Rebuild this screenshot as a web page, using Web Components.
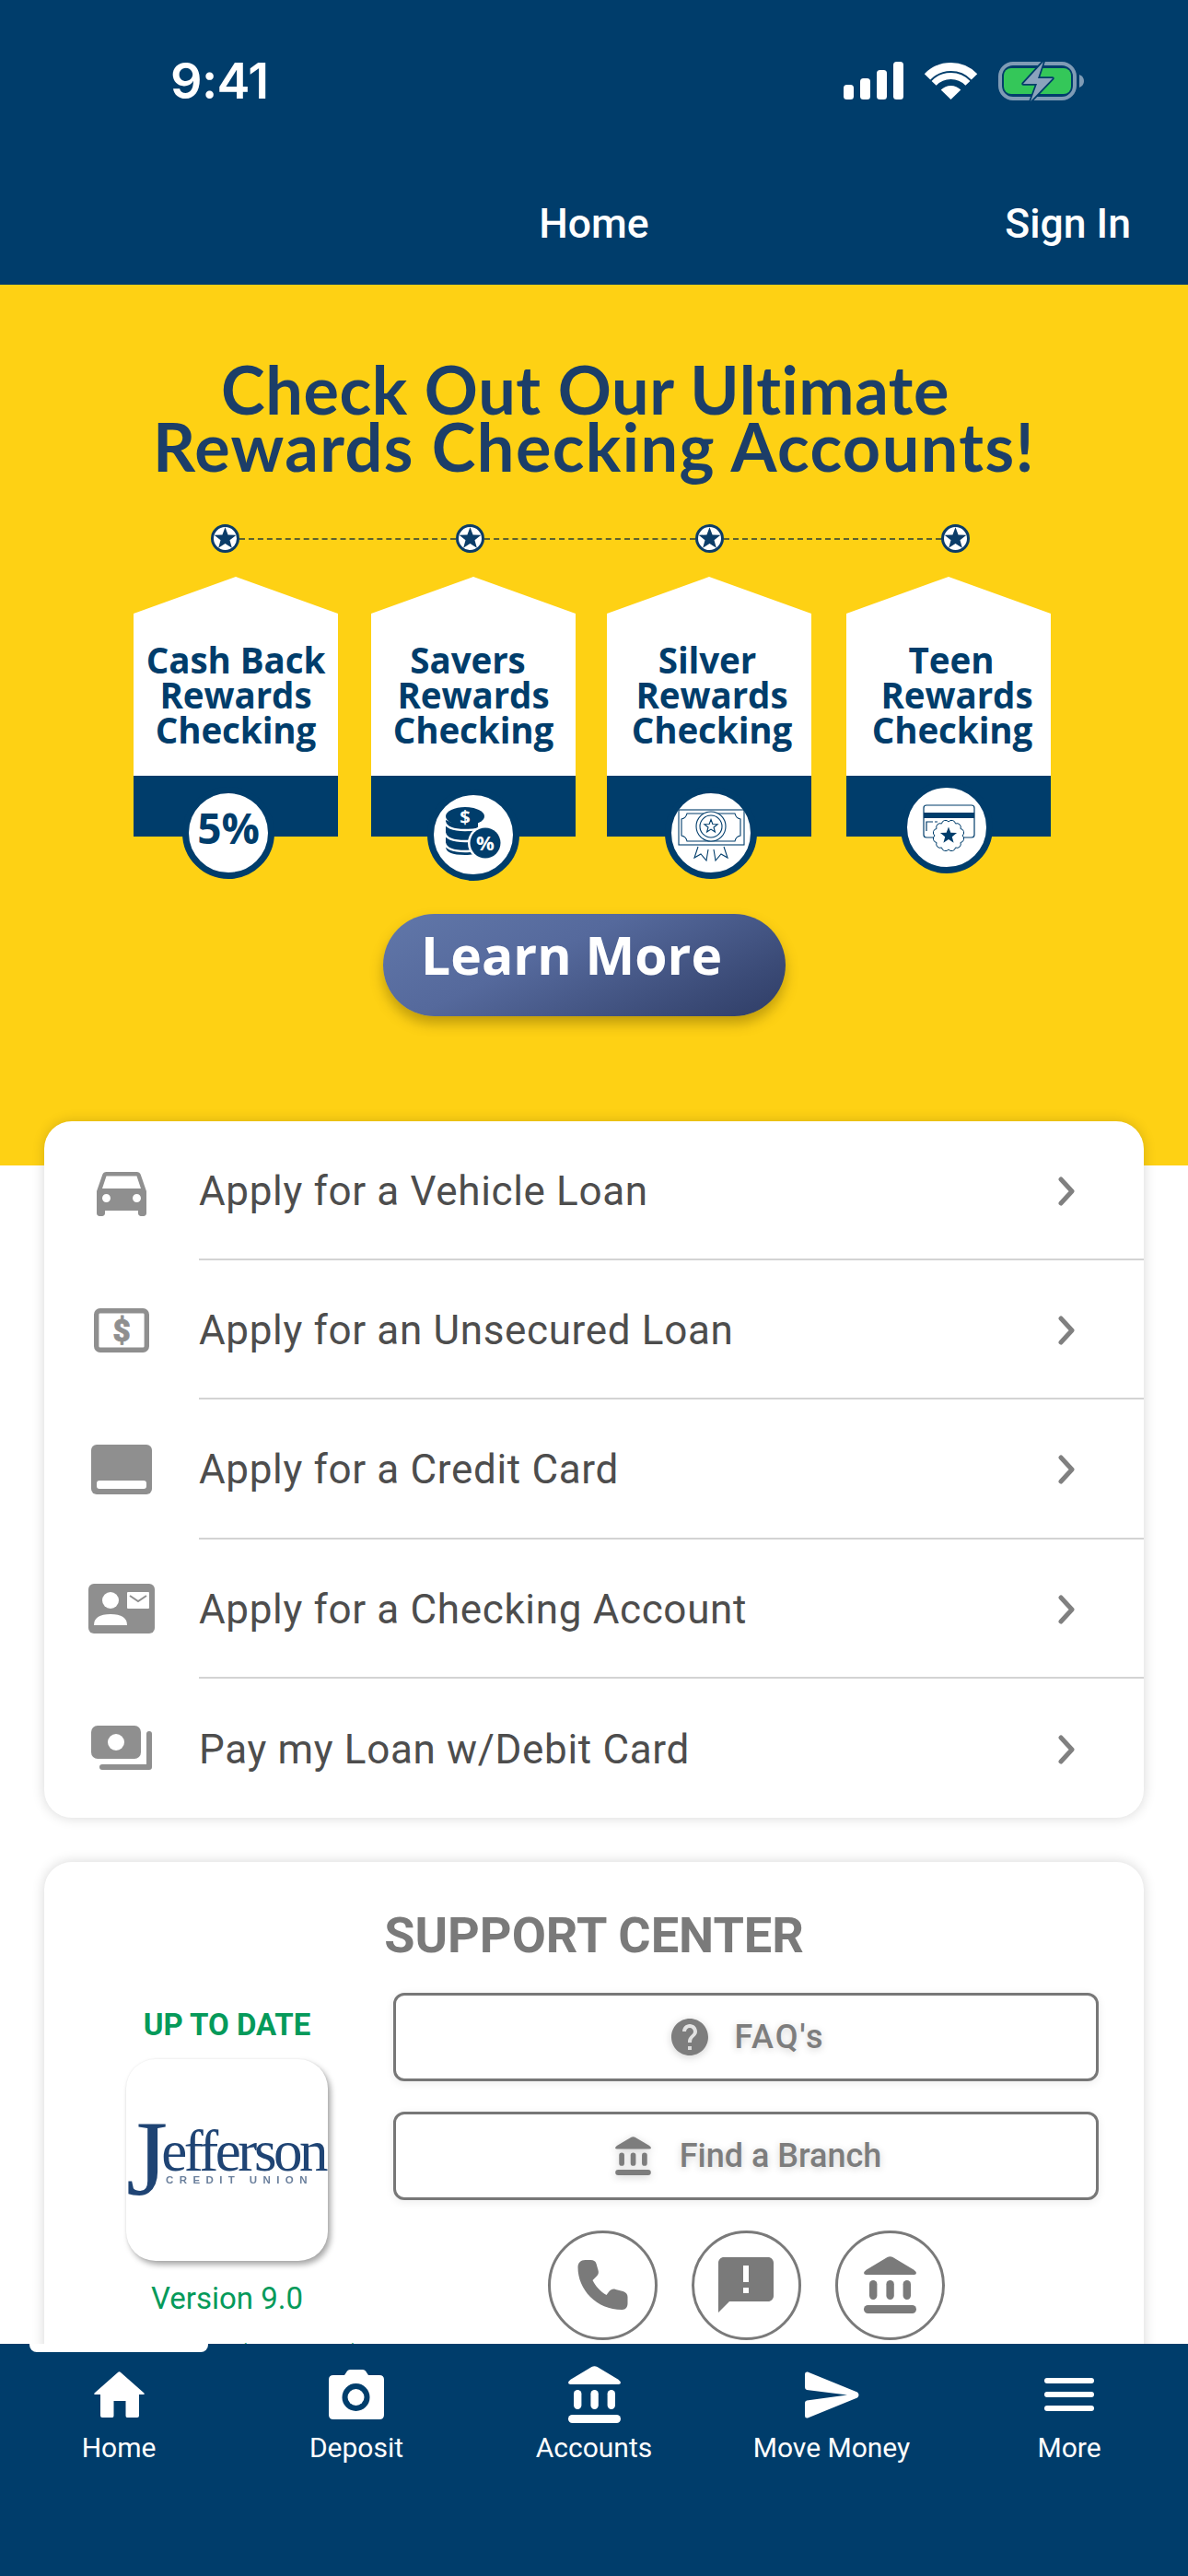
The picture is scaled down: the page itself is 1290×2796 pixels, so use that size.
<!DOCTYPE html>
<html lang="en">
<head>
<meta charset="utf-8">
<title>Home</title>
<style>
  html, body { margin: 0; padding: 0; background: #fff; }
  body { width: 1290px; height: 2796px; overflow: hidden; font-family: Roboto, "Liberation Sans", sans-serif; }
</style>
</head>
<body>
<app-shell>
  <status-header slot="top" title-text="Home" action="Sign In"></status-header>

  <promo-banner>
    <promo-card offset="-8" icon="five"><span>Cash Back</span><span>Rewards</span><span>Checking</span></promo-card>
    <promo-card offset="0" icon="coins" bump="2"><span style="margin-left:-12px">Savers</span><span>Rewards</span><span>Checking</span></promo-card>
    <promo-card offset="2" icon="cert"><span style="margin-left:-4px">Silver</span><span style="margin-left:6px">Rewards</span><span style="margin-left:6px">Checking</span></promo-card>
    <promo-card offset="-2" icon="seal" bump="-6"><span style="margin-left:6px">Teen</span><span style="margin-left:18px">Rewards</span><span style="margin-left:8px">Checking</span></promo-card>
  </promo-banner>

  <apply-list>
    <apply-row icon="car">Apply for a Vehicle Loan</apply-row>
    <apply-row icon="bill">Apply for an Unsecured Loan</apply-row>
    <apply-row icon="credit">Apply for a Credit Card</apply-row>
    <apply-row icon="contact">Apply for a Checking Account</apply-row>
    <apply-row icon="money" last>Pay my Loan w/Debit Card</apply-row>
  </apply-list>

  <support-center>
    <support-button icon="help" spacing="2">FAQ's</support-button>
    <support-button icon="bank">Find a Branch</support-button>
  </support-center>

  <tab-bar slot="bottom">
    <tab-item icon="home">Home</tab-item>
    <tab-item icon="camera">Deposit</tab-item>
    <tab-item icon="bank">Accounts</tab-item>
    <tab-item icon="send">Move Money</tab-item>
    <tab-item icon="menu">More</tab-item>
  </tab-bar>
</app-shell>

<script>
// star polygon points around cx,cy
function starPoints(cx, cy, r) {
  const pts = [];
  for (let i = 0; i < 10; i++) {
    const rad = i % 2 ? r * 0.42 : r;
    const a = (Math.PI / 5) * i - Math.PI / 2;
    pts.push((cx + rad * Math.cos(a)).toFixed(2) + "," + (cy + rad * Math.sin(a)).toFixed(2));
  }
  return pts.join(" ");
}

// wavy seal outline for the teen card badge
function sealPath(cx, cy, r) {
  let d = "";
  const n = 12;
  for (let i = 0; i <= n; i++) {
    const a = ((Math.PI * 2) / n) * i;
    const x = (cx + r * Math.cos(a)).toFixed(2);
    const y = (cy + r * Math.sin(a)).toFixed(2);
    d += i === 0 ? `M${x} ${y}` : `A${(r * 0.28).toFixed(2)} ${(r * 0.28).toFixed(2)} 0 0 1 ${x} ${y}`;
  }
  return d + "Z";
}

const ICONS = {
  car: [72, 72, "0 0 24 24", `<path fill="currentColor" d="M18.92 6.01C18.72 5.42 18.16 5 17.5 5h-11c-.66 0-1.21.42-1.42 1.01L3 12v8c0 .55.45 1 1 1h1c.55 0 1-.45 1-1v-1h12v1c0 .55.45 1 1 1h1c.55 0 1-.45 1-1v-8l-2.08-5.99zM6.5 16c-.83 0-1.5-.67-1.5-1.5S5.67 13 6.5 13s1.5.67 1.5 1.5S7.33 16 6.5 16zm11 0c-.83 0-1.5-.67-1.5-1.5s.67-1.5 1.5-1.5 1.5.67 1.5 1.5-.67 1.5-1.5 1.5zM5 11l1.5-4.5h11L19 11H5z"/>`],
  bill: [72, 54, "0 0 72 54", `<rect x="8.7" y="5.7" width="54.6" height="42.6" rx="4" fill="none" stroke="currentColor" stroke-width="5.4"/><text x="36" y="39" text-anchor="middle" font-family="Roboto, sans-serif" font-weight="900" font-size="33" fill="currentColor" stroke="currentColor" stroke-width=".8">$</text>`],
  credit: [72, 54, "0 0 72 54", `<rect x="3" y="0" width="66" height="54" rx="6" fill="currentColor"/><rect x="9" y="39" width="54" height="9" rx="3" fill="#fff"/>`],
  contact: [72, 54, "0 0 72 54", `<rect width="72" height="54" rx="6" fill="currentColor"/><circle cx="24" cy="18" r="9" fill="#fff"/><path d="M6 45Q6 33 24 33Q42 33 42 45Z" fill="#fff"/><rect x="42" y="9" width="24" height="18" rx="1" fill="#fff"/><path d="M45 13l9 6 9-6" fill="none" stroke="currentColor" stroke-width="2"/>`],
  money: [72, 54, "0 0 72 54", `<rect x="3" y="3" width="54" height="36" rx="7" fill="currentColor"/><circle cx="30" cy="21" r="9" fill="#fff"/><path d="M66 12V48H15" fill="none" stroke="currentColor" stroke-width="6" stroke-linecap="round" stroke-linejoin="round"/>`],
  help: [40, 40, "2 2 20 20", `<path fill="currentColor" d="M12 2C6.48 2 2 6.48 2 12s4.48 10 10 10 10-4.48 10-10S17.52 2 12 2zm1 17h-2v-2h2v2zm2.07-7.75l-.9.92C13.45 12.9 13 13.5 13 15h-2v-.5c0-1.1.45-2.1 1.17-2.83l1.24-1.26c.37-.36.59-.86.59-1.41 0-1.1-.9-2-2-2s-2 .9-2 2H8c0-2.21 1.79-4 4-4s4 1.79 4 4c0 .88-.36 1.68-.93 2.25z"/>`],
  bank: [57, 62, "0 0 57 62", `<path fill="currentColor" d="M25.5 1Q28.5-.6 31.5 1L54 14.5Q57 16.5 57 18Q57 20 54.5 20H2.5Q0 20 0 18Q0 16.5 3 14.5Z"/><rect x="6" y="26" width="8.4" height="21" rx="4.2" fill="currentColor"/><rect x="24.4" y="26" width="8.4" height="21" rx="4.2" fill="currentColor"/><rect x="42.6" y="26" width="8.4" height="21" rx="4.2" fill="currentColor"/><rect x="0" y="53" width="57" height="9" rx="4.5" fill="currentColor"/>`],
  home: [55, 50, "0 0 55 50", `<path fill="currentColor" d="M26 1Q27.5-.5 29 1L54.5 23.5Q55.3 25 54 25H49V48Q49 50 47 50H36Q34.5 50 34.5 48V32H21.5V48Q21.5 50 20 50H9Q7 50 7 48V25H1Q-.3 25 .5 23.5Z"/>`],
  camera: [60, 54, "0 0 60 54", `<path fill="currentColor" d="M17 6L20 1.5Q21 0 23 0H37Q39 0 40 1.5L43 6H55Q60 6 60 11V49Q60 54 55 54H5Q0 54 0 49V11Q0 6 5 6Z"/><circle cx="29.5" cy="30" r="15" fill="var(--cut,#003d6b)"/><circle cx="29.5" cy="30" r="9" fill="currentColor"/>`],
  send: [59, 51, "0 0 59 51", `<path fill="currentColor" d="M0 3Q0 0 3 .6L57 22.5Q60 25.5 57 28.5L3 50.4Q0 51 0 48V34Q0 32 2 31.5L46 25.5L2 20Q0 19.5 0 17Z"/>`],
  menu: [54, 36, "0 0 54 36", `<rect width="54" height="6" rx="3" fill="currentColor"/><rect y="15" width="54" height="6" rx="3" fill="currentColor"/><rect y="30" width="54" height="6" rx="3" fill="currentColor"/>`],
  phone: [55, 54, "0 0 54 54", `<path fill="currentColor" d="M8 0C3 0 0 3 0 8C0 32 20 54 48 54C52 54 54 51 54 47V40C54 37 52 35 49 34L41 32C38 31 36 32 34 34L31 38C24 34 19 28 16 22L20 18C22 16 23 14 22 11L20 4C19 1 17 0 14 0Z"/>`],
  alert: [72, 72, "0 0 24 24", `<path fill="currentColor" d="M20 2H4c-1.1 0-1.99.9-1.99 2L2 22l4-4h14c1.1 0 2-.9 2-2V4c0-1.1-.9-2-2-2zm-7 9h-2V5h2v6zm0 4h-2v-2h2v2z"/>`],
  five: [86, 86, "0 0 86 86", `<text x="43" y="55" text-anchor="middle" font-family="'Open Sans', sans-serif" font-weight="700" font-size="46" fill="currentColor">5%</text>`],
  coins: [86, 86, "0 0 86 86", `
    <ellipse cx="34" cy="23" rx="21" ry="10" fill="currentColor"/>
    <path fill="currentColor" d="M13 27v29q0 9 21 9 8 0 14-2V30H20Z"/>
    <path fill="none" stroke="#fff" stroke-width="2.4" d="M12 29q2 9 22 9 14 0 21-4M12 41q2 9 22 9 6 0 12-1M12 52q2 9 22 9 4 0 8-.5"/>
    <text x="34" y="31" text-anchor="middle" font-family="'Open Sans', sans-serif" font-weight="700" font-size="20" fill="#fff">$</text>
    <circle cx="56" cy="52" r="19" fill="#fff"/><circle cx="56" cy="52" r="16.5" fill="currentColor"/>
    <text x="56" y="60" text-anchor="middle" font-family="'Open Sans', sans-serif" font-weight="700" font-size="22" fill="#fff">%</text>`],
  cert: [86, 86, "0 0 86 86", `
    <g fill="none" stroke="currentColor" stroke-width="1.1">
      <path d="M29 58l-4 12 7-4 6 7 2-12M57 58l4 12-7-4-6 7-2-12" fill="#fff"/>
      <rect x="8" y="18" width="71" height="38" fill="none"/>
      <path d="M17 22H69Q70 27 75 28V46Q70 47 69 52H17Q16 47 11 46V28Q16 27 17 22Z"/>
      <circle cx="43" cy="36" r="16" fill="#fff"/><circle cx="43" cy="36" r="12"/>
      <polygon points="${starPoints(43, 36, 7.5)}"/>
    </g>`],
  seal: [86, 86, "0 0 86 86", `
    <rect x="18" y="19" width="55" height="35" rx="3" fill="none" stroke="currentColor" stroke-width="1.2"/>
    <rect x="18" y="27" width="55" height="6" fill="currentColor"/>
    <path d="M21 47v-10h7M30 37h3" fill="none" stroke="currentColor" stroke-width="1.2"/>
    <path d="${sealPath(45, 52, 15)}" fill="#fff" stroke="currentColor" stroke-width="1"/>
    <polygon points="${starPoints(45, 52, 9.5)}" fill="currentColor"/>`],
};

class AppIcon extends HTMLElement {
  constructor() {
    super();
    this.attachShadow({ mode: "open" });
  }
  connectedCallback() {
    const [w, h, box, body] = ICONS[this.getAttribute("name")];
    const width = this.getAttribute("width") || w;
    const height = this.getAttribute("height") || h;
    this.shadowRoot.innerHTML = `
      <style>:host { display: block; line-height: 0; } svg { display: block; overflow: visible; }</style>
      <svg xmlns="http://www.w3.org/2000/svg" width="${width}" height="${height}" viewBox="${box}">${body}</svg>`;
  }
}

class AppShell extends HTMLElement {
  constructor() {
    super();
    this.attachShadow({ mode: "open" });
    this.shadowRoot.innerHTML = `
      <style>
        :host { display: flex; flex-direction: column; width: 1290px; height: 2796px; overflow: hidden; }
        main { flex: 1; min-height: 0; overflow: hidden; background: #fff; }
      </style>
      <slot name="top"></slot>
      <main><slot></slot></main>
      <slot name="bottom"></slot>`;
  }
}

class StatusHeader extends HTMLElement {
  constructor() {
    super();
    this.attachShadow({ mode: "open" });
  }
  connectedCallback() {
    this.shadowRoot.innerHTML = `
      <style>
        :host { display: block; height: 309px; background: #003d6b; color: #fff; box-sizing: border-box; padding-top: 64px; }
        .status { display: flex; align-items: center; height: 47px; padding: 0 113px 0 185px; }
        .time { font: 600 54px/47px Inter, "Liberation Sans", sans-serif; letter-spacing: -.6px; }
        .icons { margin-left: auto; display: flex; align-items: center; gap: 23px; }
        svg { display: block; overflow: visible; }
        .nav { display: grid; grid-template-columns: 1fr auto 1fr; align-items: center; height: 48px; margin-top: 108px; padding: 0 62px; }
        .nav .title { grid-column: 2; font: 500 44.5px/48px Roboto, sans-serif; }
        .nav .action { grid-column: 3; justify-self: end; font: 500 44.5px/48px Roboto, sans-serif; }
      </style>
      <div class="status">
        <span class="time">9:41</span>
        <div class="icons">
          <svg width="65" height="41" viewBox="0 0 65 41" fill="#fff">
            <rect y="25" width="11" height="16" rx="3.5"/><rect x="18" y="18" width="11" height="23" rx="3.5"/>
            <rect x="36" y="9" width="11" height="32" rx="3.5"/><rect x="54" width="11" height="41" rx="3.5"/>
          </svg>
          <svg width="57" height="40" viewBox="0 0 57 40">
            <path d="M3 15.3A35.5 35.5 0 0 1 54 15.3" fill="none" stroke="#fff" stroke-width="9"/>
            <path d="M10.1 22.3A25.5 25.5 0 0 1 46.9 22.3" fill="none" stroke="#fff" stroke-width="7"/>
            <path d="M28.5 40L17.7 29.6A15 15 0 0 1 39.3 29.6Z" fill="#fff"/>
          </svg>
          <svg width="93" height="42" viewBox="0 0 93 42">
            <rect x="2" y="2" width="81" height="38" rx="14" fill="none" stroke="#7f9bb5" stroke-width="4"/>
            <rect x="6" y="7" width="73" height="28" rx="8" fill="#34c759"/>
            <path d="M88 14q5 2 5 7t-5 7z" fill="#7f9bb5"/>
            <path d="M49 0L27 24H42L35 43L59 18H43Z" fill="#8ba3bd" stroke="#003d6b" stroke-width="3.5" stroke-linejoin="round" paint-order="stroke"/>
          </svg>
        </div>
      </div>
      <div class="nav">
        <span class="title">${this.getAttribute("title-text")}</span>
        <span class="action">${this.getAttribute("action")}</span>
      </div>`;
  }
}

class PromoBanner extends HTMLElement {
  constructor() {
    super();
    this.attachShadow({ mode: "open" });
    const pin = `<svg width="31" height="31" viewBox="0 0 31 31"><circle cx="15.5" cy="15.5" r="14" fill="#fff" stroke="#0b3c68" stroke-width="3"/><polygon points="${starPoints(15.5, 15.7, 12.5)}" fill="#0b3c68"/></svg>`;
    this.shadowRoot.innerHTML = `
      <style>
        :host { display: block; height: 956px; background: #fed114; color: #1c3e68; padding-top: 82px; box-sizing: border-box; }
        h1 { margin: 0; text-align: center; font: 700 72px/62px Lato, "Open Sans", sans-serif; }
        h1 span { display: block; letter-spacing: 1.42px; }
        h1 span:first-child { margin-left: -19px; letter-spacing: .58px; }
        .pins { display: flex; align-items: center; margin: 54px 0 0 229px; height: 31px; }
        .pins i { flex: none; border-top: 2px dashed #5d6130; }
        svg { display: block; flex: none; }
        .cards { display: flex; margin: 26px 0 0 145px; }
        ::slotted(promo-card:nth-child(2)) { margin-left: 36px; }
        ::slotted(promo-card:nth-child(3)) { margin-left: 34px; }
        ::slotted(promo-card:nth-child(4)) { margin-left: 38px; }
        .cta { display: flex; align-items: center; box-sizing: border-box; width: 437px; height: 111px; margin: 84px 0 0 416px; padding: 0 0 22px 41px;
          border-radius: 56px; background: linear-gradient(155deg, #6177a9 0%, #55699c 40%, #3b4b77 80%, #2f3d66 100%);
          box-shadow: 0 8px 14px rgba(90, 70, 0, .38); color: #fff; font: 700 57px/1 "Open Sans", sans-serif; }
      </style>
      <h1><span>Check Out Our Ultimate</span><span>Rewards Checking Accounts!</span></h1>
      <div class="pins">${pin}<i style="width:234.5px"></i>${pin}<i style="width:229.5px"></i>${pin}<i style="width:235.5px"></i>${pin}</div>
      <div class="cards"><slot></slot></div>
      <div class="cta">Learn More</div>`;
  }
}

class PromoCard extends HTMLElement {
  constructor() {
    super();
    this.attachShadow({ mode: "open" });
  }
  connectedCallback() {
    const offset = Number(this.getAttribute("offset") || 0);
    const bump = Number(this.getAttribute("bump") || 0);
    this.shadowRoot.innerHTML = `
      <style>
        :host { display: block; position: relative; flex: none; width: 222px; height: 282px; }
        .shape { display: flex; flex-direction: column; height: 100%; clip-path: polygon(50% 0, 100% 40px, 100% 100%, 0 100%, 0 40px); }
        .label { flex: 1; background: #fff; padding-top: 71px; text-align: center; white-space: nowrap; color: #003d6b; font: 700 38.6px/38px "Open Sans", sans-serif; letter-spacing: -.1px; }
        .band { height: 66px; background: #003d6b; }
        ::slotted(span) { display: block; }
        .badge { position: absolute; left: calc(50% - 50px + ${offset}px); top: ${228 + bump}px; width: 86px; height: 86px;
          border: 7px solid #003d6b; border-radius: 50%; background: #fff; color: #003d6b; }
      </style>
      <div class="shape"><div class="label"><slot></slot></div><div class="band"></div></div>
      <div class="badge"><app-icon name="${this.getAttribute("icon")}"></app-icon></div>`;
  }
}

class ApplyList extends HTMLElement {
  constructor() {
    super();
    this.attachShadow({ mode: "open" });
    this.shadowRoot.innerHTML = `
      <style>
        :host { display: block; position: relative; margin: -48px 48px 0; background: #fff; border-radius: 30px; box-shadow: 0 0 14px rgba(0, 0, 0, .16); }
      </style>
      <slot></slot>`;
  }
}

class ApplyRow extends HTMLElement {
  constructor() {
    super();
    this.attachShadow({ mode: "open" });
  }
  connectedCallback() {
    const line = this.hasAttribute("last") ? "none" : "2px solid #d3d3d3";
    this.shadowRoot.innerHTML = `
      <style>
        :host { display: flex; height: 151.2px; color: #8f8f8f; }
        .icon { flex: none; width: 168px; display: flex; align-items: center; justify-content: center; }
        .body { flex: 1; display: flex; align-items: center; padding: 3px 75px 0 0; border-bottom: ${line}; box-sizing: border-box; }
        .text { flex: 1; color: #4d4d4d; font: 400 44px/56px Roboto, sans-serif; letter-spacing: .66px; }
        svg { display: block; }
      </style>
      <div class="icon"><app-icon name="${this.getAttribute("icon")}"></app-icon></div>
      <div class="body">
        <span class="text"><slot></slot></span>
        <svg width="18" height="32" viewBox="0 0 18 32"><path d="M3 3l12 13L3 29" fill="none" stroke="#808080" stroke-width="5" stroke-linecap="round" stroke-linejoin="round"/></svg>
      </div>`;
  }
}

class SupportCenter extends HTMLElement {
  constructor() {
    super();
    this.attachShadow({ mode: "open" });
    this.shadowRoot.innerHTML = `
      <style>
        :host { display: block; margin: 48px 48px 0; padding-top: 50px; height: 700px; box-sizing: border-box; background: #fff; border-radius: 30px 30px 0 0; box-shadow: 0 0 14px rgba(0, 0, 0, .16); }
        h2 { margin: 0; text-align: center; color: #7a7a7a; font: 700 54px/60px Roboto, sans-serif; }
        .cols { display: flex; }
        .app { flex: none; width: 361px; padding: 47px 0 0 18px; text-align: center; color: #059a5a; font: 400 33px/40px Roboto, sans-serif; }
        .app b { display: block; font: 700 33px/40px Roboto, sans-serif; }
        .logo { width: 219px; height: 219px; margin: 17px auto 21px; border-radius: 32px; background: #fff;
          box-shadow: 3px 4px 6px rgba(0, 0, 0, .35), 0 0 2px rgba(0, 0, 0, .08); overflow: hidden; text-align: left; }
        .words { padding-top: 69px; filter: blur(.7px); color: #1f4474; font-family: "Liberation Serif", serif; }
        .mark { font-size: 63px; line-height: 63px; letter-spacing: -3.4px; white-space: nowrap; }
        .j { font-size: 116px; line-height: 0; letter-spacing: 0; vertical-align: -26px; margin-right: -7px; }
        .cu { margin: -8px 0 0 43px; font: 700 11.5px/14px "Liberation Sans", sans-serif; letter-spacing: 6.4px; color: #6a7f9c; white-space: nowrap; }
        .build { margin-top: 23px; white-space: nowrap; font-size: 31px; }
        .links { flex: 1; padding: 32px 49px 0 0; display: flex; flex-direction: column; gap: 33px; }
        .round { display: flex; justify-content: center; gap: 37px; }
        .round span { display: flex; align-items: center; justify-content: center; box-sizing: border-box; width: 119px; height: 119px; border: 3px solid #7a7a7a; border-radius: 50%; color: #7a7a7a; }
      </style>
      <h2>SUPPORT CENTER</h2>
      <div class="cols">
        <div class="app">
          <b>UP TO DATE</b>
          <div class="logo"><div class="words"><div class="mark"><span class="j">J</span>efferson</div><div class="cu">CREDIT UNION</div></div></div>
          <div>Version 9.0</div>
          <div class="build">iOS 9.0.0.1 (20231.1)</div>
        </div>
        <div class="links">
          <slot></slot>
          <div class="round">
            <span><app-icon name="phone"></app-icon></span>
            <span><app-icon name="alert"></app-icon></span>
            <span><app-icon name="bank"></app-icon></span>
          </div>
        </div>
      </div>`;
  }
}

class SupportButton extends HTMLElement {
  constructor() {
    super();
    this.attachShadow({ mode: "open" });
  }
  connectedCallback() {
    const bank = this.getAttribute("icon") === "bank";
    this.shadowRoot.innerHTML = `
      <style>
        :host { display: flex; align-items: center; justify-content: center; gap: ${bank ? 31 : 28}px; height: 96px; box-sizing: border-box; padding-left: 5px; border: 3px solid #777; border-radius: 12px;
          background: #fff; box-shadow: 0 2px 10px rgba(0, 0, 0, .08); color: #7d7d7d; font: 500 36px/1 Roboto, sans-serif; letter-spacing: ${this.getAttribute("spacing") || 0}px; text-shadow: 0 2px 8px rgba(0, 0, 0, .18); }
        app-icon { filter: drop-shadow(0 2px 4px rgba(0, 0, 0, .18)); }
      </style>
      <app-icon name="${this.getAttribute("icon")}" ${bank ? 'width="39" height="42"' : ""}></app-icon>
      <span><slot></slot></span>`;
  }
}

class TabBar extends HTMLElement {
  constructor() {
    super();
    this.attachShadow({ mode: "open" });
    this.shadowRoot.innerHTML = `
      <style>
        :host { display: grid; position: relative; grid-template-columns: repeat(5, 258px); align-items: start; height: 252px; background: #003d6b; --cut: #003d6b; }
        .nub { position: absolute; left: 32px; top: 0; width: 194px; height: 9px; background: #fff; border-radius: 0 0 8px 8px; }
      </style>
      <div class="nub"></div>
      <slot></slot>`;
  }
}

class TabItem extends HTMLElement {
  constructor() {
    super();
    this.attachShadow({ mode: "open" });
  }
  connectedCallback() {
    this.shadowRoot.innerHTML = `
      <style>
        :host { display: flex; flex-direction: column; align-items: center; padding-top: 24px; color: #fff; font: 400 30px/36px Roboto, sans-serif; }
        .icon { height: 62px; display: flex; align-items: center; }
        .label { margin-top: 9px; white-space: nowrap; }
      </style>
      <div class="icon"><app-icon name="${this.getAttribute("icon")}"></app-icon></div>
      <div class="label"><slot></slot></div>`;
  }
}

customElements.define("app-icon", AppIcon);
customElements.define("app-shell", AppShell);
customElements.define("status-header", StatusHeader);
customElements.define("promo-banner", PromoBanner);
customElements.define("promo-card", PromoCard);
customElements.define("apply-list", ApplyList);
customElements.define("apply-row", ApplyRow);
customElements.define("support-center", SupportCenter);
customElements.define("support-button", SupportButton);
customElements.define("tab-bar", TabBar);
customElements.define("tab-item", TabItem);
</script>
</body>
</html>
